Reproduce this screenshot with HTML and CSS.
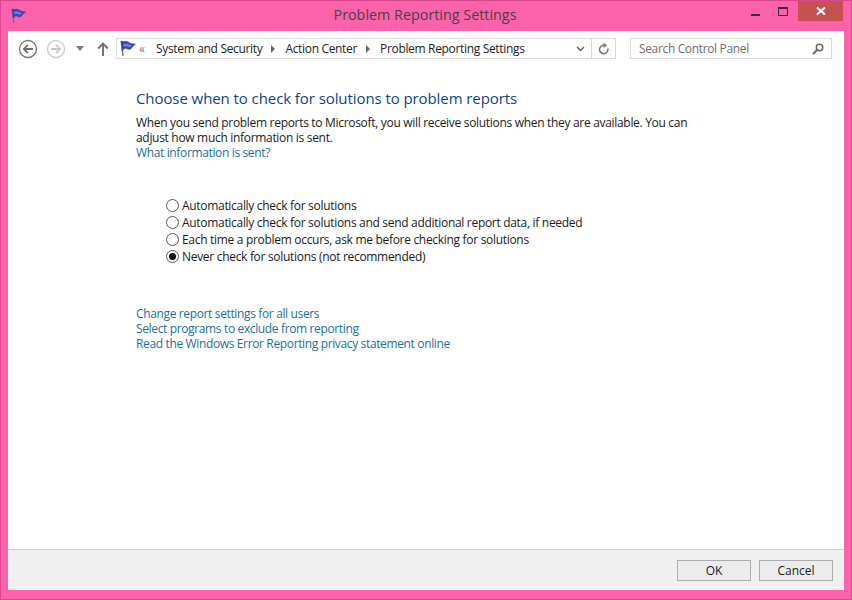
FILE: index.html
```html
<!DOCTYPE html>
<html lang="en">
<head>
<meta charset="utf-8">
<title>Problem Reporting Settings</title>
<link rel="stylesheet" href="styles.css">
</head>
<body>
<div class="window">
  <header class="titlebar">
    <svg class="flag title-flag" viewBox="0 0 16 16"><use href="#flag"/></svg>
    <div class="title">Problem Reporting Settings</div>
    <div class="caps">
      <div class="cap"><span class="min"></span></div>
      <div class="cap"><span class="max"></span></div>
      <div class="cap close"><svg viewBox="0 0 10 10" width="10" height="10"><path d="M1 1.500 9 8.500M9 1.500 1 8.500" stroke="#fff" stroke-width="2"/></svg></div>
    </div>
  </header>
  <main class="client">
    <nav class="toolbar">
      <svg class="navbtn" viewBox="0 0 20 20"><circle cx="10" cy="10" r="8.500" fill="#fff" stroke="#7a7a7a" stroke-width="1.400"/><path d="M15 10H6M10 5.800 5.800 10 10 14.200" fill="none" stroke="#6f6f6f" stroke-width="1.800"/></svg>
      <svg class="navbtn fwd" viewBox="0 0 20 20"><circle cx="10" cy="10" r="8.500" fill="#fff" stroke="#cfcfcf" stroke-width="1.400"/><path d="M5 10h9M10 5.800 14.200 10 10 14.200" fill="none" stroke="#c8c8c8" stroke-width="1.800"/></svg>
      <svg class="drop" viewBox="0 0 8 5"><path d="M0 0h8L4 5z" fill="#777"/></svg>
      <svg class="up" viewBox="0 0 12 14"><path d="M6 14V2M1.200 6.500 6 1.500l4.800 5" fill="none" stroke="#707070" stroke-width="1.900"/></svg>
      <div class="address">
        <svg class="flag addr-flag" viewBox="0 0 16 16"><use href="#flag"/></svg>
        <span class="chev">«</span>
        <span class="crumb">System and Security</span><i class="arrow"></i>
        <span class="crumb">Action Center</span><i class="arrow"></i>
        <span class="crumb">Problem Reporting Settings</span>
        <svg class="addr-down" viewBox="0 0 9 6"><path d="M1 1 4.500 4.500 8 1" fill="none" stroke="#666" stroke-width="1.500"/></svg>
        <div class="refresh"><svg viewBox="0 0 12 14" width="12" height="14"><path d="M9.800 6.500A4.200 4.200 0 1 1 6 3.300" fill="none" stroke="#777" stroke-width="1.600"/><path d="M5.500 0.500 9 3.300 5.500 6z" fill="#777"/></svg></div>
      </div>
      <div class="search">
        <span>Search Control Panel</span>
        <svg viewBox="0 0 12 12" width="12" height="12"><circle cx="7.500" cy="4.500" r="3.200" fill="none" stroke="#666" stroke-width="1.500"/><path d="M5 7 1 11" stroke="#666" stroke-width="2"/></svg>
      </div>
    </nav>
    <section class="content">
      <h1>Choose when to check for solutions to problem reports</h1>
      <p class="intro">When you send problem reports to Microsoft, you will receive solutions when they are available. You can<br>adjust how much information is sent.</p>
      <a class="link" href="#">What information is sent?</a>
      <div class="options">
        <label class="opt"><span class="radio"></span>Automatically check for solutions</label>
        <label class="opt"><span class="radio"></span>Automatically check for solutions and send additional report data, if needed</label>
        <label class="opt"><span class="radio"></span>Each time a problem occurs, ask me before checking for solutions</label>
        <label class="opt"><span class="radio on"></span>Never check for solutions (not recommended)</label>
      </div>
      <div class="links">
        <a class="link" href="#">Change report settings for all users</a>
        <a class="link" href="#">Select programs to exclude from reporting</a>
        <a class="link" href="#">Read the Windows Error Reporting privacy statement online</a>
      </div>
    </section>
    <footer class="footer">
      <button class="btn">OK</button>
      <button class="btn">Cancel</button>
    </footer>
  </main>
</div>
<svg class="defs" width="0" height="0"><defs><g id="flag"><path d="M2 1 3.800 15" stroke="#6a6a8a" stroke-width="1.300" fill="none"/><path d="M2.300 1C5 2.200 7 0.500 9 2 11 3.500 13 3.500 15.500 4 14 5 13 6 12 7.200 11 9.200 9 9.200 7 8 5.500 7.200 4.500 9 3.300 10z" fill="#3347b8" stroke="#24308c" stroke-width="0.500"/><path d="M4 3.500C6 4 8 3 9.500 4.200 10.500 5 11.500 5.200 12.500 5.200 11 6.500 9.500 7 8 6.200 6.500 5.500 5.500 6 4.500 6.500z" fill="#6b82ee"/></g></defs></svg>
</body>
</html>
```
FILE: styles.css
```css
* { box-sizing: border-box; }
html, body { margin: 0; height: 100%; }
body { font-family: "Open Sans", "Liberation Sans", sans-serif; font-size: 12px; color: #1a1a1a; overflow: hidden; }
.defs { position: absolute; }
.window { width: 852px; height: 600px; background: #fc62ac; border: 1px solid #d9488f; display: flex; flex-direction: column; padding: 0 7px 9px; }
.titlebar { height: 30px; flex: none; display: flex; align-items: center; position: relative; }
.flag { display: block; }
.title-flag { width: 16px; height: 16px; margin: 0 0 1px 2px; }
.title { position: absolute; left: -1px; right: 1px; top: 4px; text-align: center; font-size: 14.350px; line-height: 20px; color: #444; }
.caps { margin-left: auto; display: flex; align-self: flex-start; margin-right: 1px; }
.cap { width: 27px; height: 20px; display: flex; align-items: center; justify-content: center; }
.cap.close { width: 45px; background: #c75050; margin-left: 2px; }
.min { width: 9px; height: 2px; background: #333; margin-top: 7px; }
.max { width: 10px; height: 9px; border: 1px solid #333; border-top-width: 2px; }
.client { flex: 1; background: #fff; display: flex; flex-direction: column; min-height: 0; }
.toolbar { height: 36px; flex: none; display: flex; align-items: center; padding: 0 12px 1px 10px; }
.navbtn { width: 20px; height: 20px; flex: none; }
.fwd { margin-left: 8px; }
.drop { width: 8px; height: 5px; margin-left: 10px; flex: none; }
.up { width: 12px; height: 14px; margin-left: 13px; flex: none; }
.address { width: 500px; height: 21px; margin-left: 7px; border: 1px solid #d9d9d9; display: flex; align-items: center; flex: none; }
.addr-flag { width: 17px; height: 17px; margin-left: 2px; flex: none; }
.chev { margin-left: 3px; color: #777; width: 17px; font-size: 12px; }
.crumb { white-space: nowrap; color: #222; letter-spacing: -0.330px; }
.arrow { width: 0; height: 0; border-left: 4px solid #666; border-top: 4px solid transparent; border-bottom: 4px solid transparent; margin: 0 10px 0 9px; flex: none; }
.addr-down { width: 9px; height: 6px; margin-left: auto; margin-right: 6px; }
.refresh { width: 24px; height: 19px; border-left: 1px solid #d9d9d9; display: flex; align-items: center; justify-content: center; }
.search { width: 202px; height: 21px; margin-left: auto; border: 1px solid #d9d9d9; display: flex; align-items: center; justify-content: space-between; padding: 0 7px 0 8px; color: #6d6d6d; letter-spacing: -0.350px; }
.content { flex: 1; padding: 21px 0 0 128px; display: flex; flex-direction: column; align-items: flex-start; min-height: 0; }
h1 { margin: 0; font-size: 15px; font-weight: 400; line-height: 20px; color: #0f3f8f; letter-spacing: -0.080px; }
.intro { margin: 7px 0 0; line-height: 15px; letter-spacing: -0.310px; white-space: nowrap; }
.link { color: #1a6ea5; text-decoration: none; line-height: 15px; display: block; letter-spacing: -0.360px; white-space: nowrap; }
.options { margin: 37px 0 0 30px; display: flex; flex-direction: column; }
.opt { height: 17px; display: flex; align-items: center; gap: 3px; letter-spacing: -0.305px; white-space: nowrap; }
.radio { width: 13px; height: 13px; border-radius: 50%; border: 1px solid #555; background: #fff; flex: none; display: flex; align-items: center; justify-content: center; }
.radio.on::after { content: ""; width: 7px; height: 7px; border-radius: 50%; background: #111; }
.links { margin-top: 41px; display: flex; flex-direction: column; }
.footer { height: 41px; flex: none; background: #f0f0f0; border-top: 1px solid #d0d0d0; display: flex; justify-content: flex-end; align-items: flex-start; gap: 8px; padding: 10px 11px 0 0; }
.btn { width: 74px; height: 21px; padding: 0; font: inherit; color: #1a1a1a; background: #ececec; border: 1px solid #acacac; }
```
